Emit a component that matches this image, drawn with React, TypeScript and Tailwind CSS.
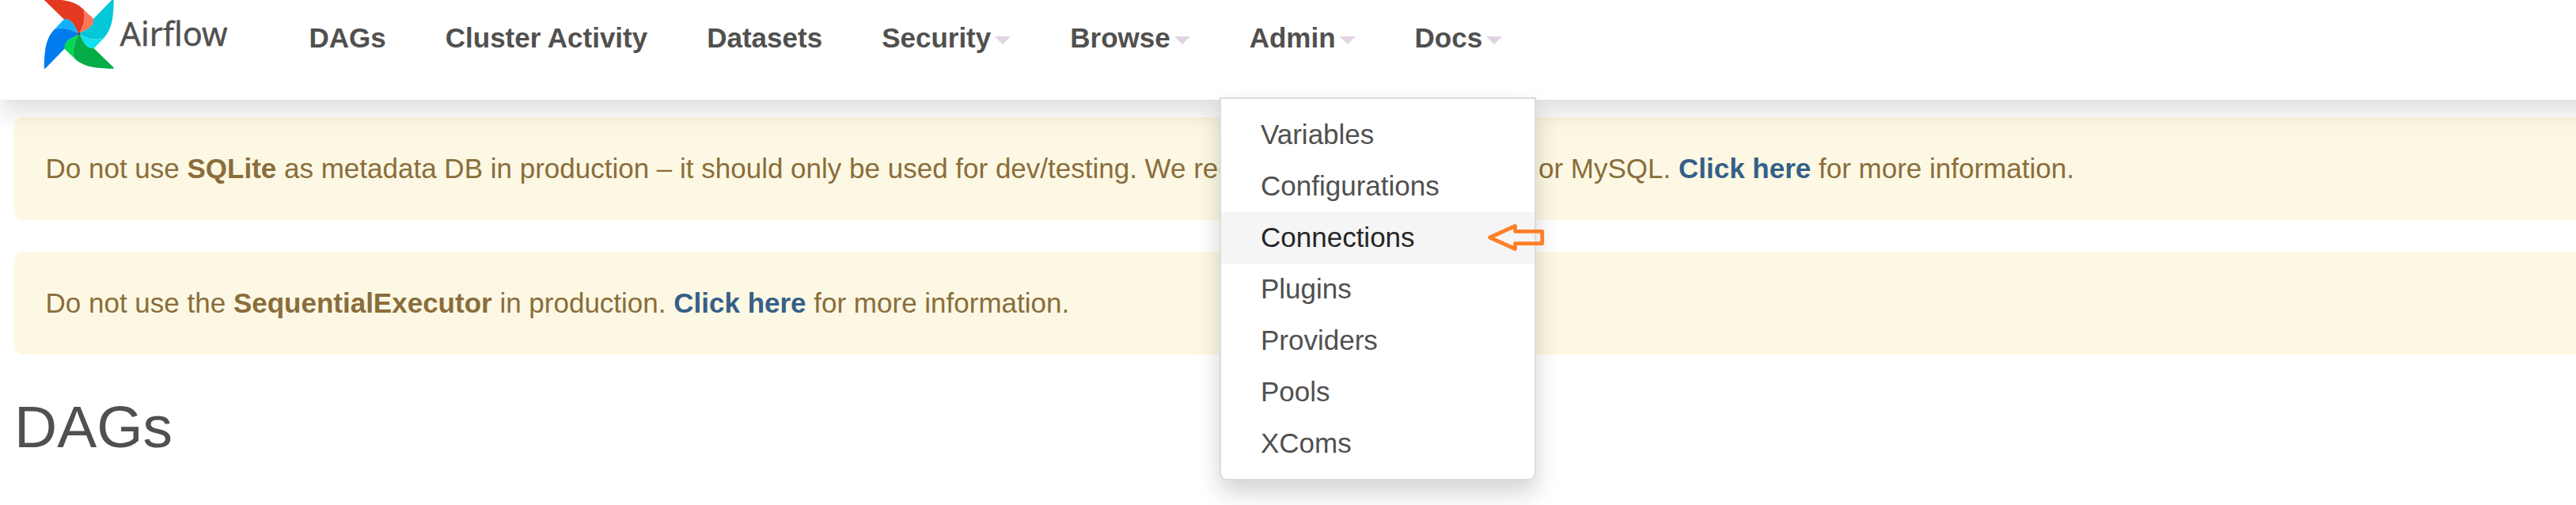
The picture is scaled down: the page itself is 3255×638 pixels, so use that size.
const navItems = [
  { label: 'DAGs', caret: false },
  { label: 'Cluster Activity', caret: false },
  { label: 'Datasets', caret: false },
  { label: 'Security', caret: true },
  { label: 'Browse', caret: true },
  { label: 'Admin', caret: true },
  { label: 'Docs', caret: true },
];

const adminItems = ['Variables', 'Configurations', 'Connections', 'Plugins', 'Providers', 'Pools', 'XComs'];

// The pinwheel is one blade turned four times round its centre.
const blades = [
  { angle: 0, main: '#e43921', fold: '#ff7557' },
  { angle: 90, main: '#04c7d7', fold: '#11e1ee' },
  { angle: 180, main: '#04ad46', fold: '#00d855' },
  { angle: 270, main: '#017cee', fold: '#11b0ff' },
];

function Logo() {
  return (
    <svg className="block h-[92px] w-[302px] shrink-0" viewBox="0 0 302 92">
      <g transform="translate(99.8 42.7)">
        {blades.map((blade) => (
          <g key={blade.angle} transform={`rotate(${blade.angle})`}>
            <path
              d="M0 0 C-4.500 -6 -5.500 -14.500 -14 -17.900 Q-16.500 -18.700 -18.500 -18 L-44 -42.700 Q-44.300 -44 -43 -44 C-20 -43.500 -6 -42 5.700 -31 C9 -20 5.500 -9 0 0Z"
              fill={blade.main}
            />
            <path
              d="M0 0 C5.500 -9 9 -20 5.700 -31 L18.200 -19 Q19.700 -17 17.900 -14 C14.500 -5.500 6 -4.500 0 0Z"
              fill={blade.fold}
            />
          </g>
        ))}
        <circle r="1.9" fill="#51504f" />
      </g>
      <text
        x="151.5"
        y="58"
        fill="#51504f"
        stroke="#51504f"
        strokeWidth="0.4"
        fontSize="42"
        fontFamily="Noto Sans, sans-serif"
        textLength="136"
        lengthAdjust="spacingAndGlyphs"
      >
        Airflow
      </text>
    </svg>
  );
}

function Caret() {
  return (
    <span className="ml-[5px] mt-[6px] size-0 border-x-[10px] border-t-[10px] border-x-transparent border-t-[#e2d2e2]" />
  );
}

function ArrowMark() {
  return (
    <svg className="absolute left-[335px] top-[154px] h-[42px] w-[76px]" viewBox="0 0 76 42">
      <path
        d="M4.500 21 L36.500 6.500 V13.300 H70.700 V28.700 H36.500 V35.500 Z"
        fill="none"
        stroke="#ff7f27"
        strokeWidth="4.8"
        strokeLinejoin="round"
      />
    </svg>
  );
}

function AdminMenu() {
  return (
    <div className="absolute left-[1541px] top-[123px] w-[400px] rounded-b-[10px] border-2 border-[#dcdcdc] bg-white py-[12.5px] shadow-[0_15px_30px_rgba(0,0,0,0.175)]">
      {adminItems.map((item) => (
        <div
          key={item}
          className={
            item === 'Connections'
              ? 'flex h-[65px] items-center bg-[#f5f5f5] px-[50px] text-[#262626]'
              : 'flex h-[65px] items-center px-[50px] text-[#51504f]'
          }
        >
          {item}
        </div>
      ))}
      <ArrowMark />
    </div>
  );
}

export default function App() {
  return (
    <div
      className="relative h-[638px] overflow-hidden bg-white text-[35px] leading-[50px] text-[#51504f]"
      style={{ fontFamily: '"Liberation Sans", Arial, sans-serif' }}
    >
      <header className="relative z-10 -mr-[60px] flex h-[126px] items-start bg-white pr-[60px] shadow-[0_15px_30px_rgba(0,0,0,0.135)]">
        <Logo />
        <nav className="ml-[51px] flex font-bold">
          {navItems.map((item) => (
            <div key={item.label} className="flex h-[96px] items-center whitespace-nowrap px-[37.5px]">
              {item.label}
              {item.caret && <Caret />}
            </div>
          ))}
        </nav>
      </header>

      <main className="pl-[18px] pt-[22px]">
        <div className="mb-[40px] flex h-[130px] items-center rounded-l-[10px] bg-[#fcf8e3] pl-[39.5px] text-[#8a6d3b]">
          <p className="whitespace-nowrap">
            Do not use <b>SQLite</b> as metadata DB in production – it should only be used for dev/testing. We
            recommend using Postgres or MySQL. <b className="text-[#355f87]">Click here</b> for more information.
          </p>
        </div>
        <div className="flex h-[130px] items-center rounded-l-[10px] bg-[#fcf8e3] pl-[39.5px] text-[#8a6d3b]">
          <p className="whitespace-nowrap">
            Do not use the <b>SequentialExecutor</b> in production. <b className="text-[#355f87]">Click here</b> for
            more information.
          </p>
        </div>
        <h1 className="mt-[50px] text-[75px] leading-[82px]">DAGs</h1>
      </main>

      <div className="absolute left-0 top-0 z-20">
        <AdminMenu />
      </div>
    </div>
  );
}
